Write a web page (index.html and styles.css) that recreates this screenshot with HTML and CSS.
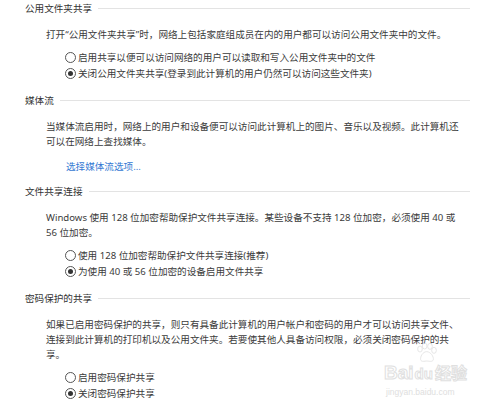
FILE: index.html
```html
<!DOCTYPE html>
<html>
    <head>
        <meta charset="utf-8">
        <link rel="stylesheet" href="styles.css">
    </head>
    <body>
        <div class="panel">
            <div class="group">
                <div class="group-head">
                    <span class="group-title">公用文件夹共享</span>
                    <span class="group-rule"></span>
                </div>
                <p class="group-text">打开“公用文件夹共享”时，网络上包括家庭组成员在内的用户都可以访问公用文件夹中的文件。</p>
                <ul class="options">
                    <li class="option"><span class="radio"></span>启用共享以便可以访问网络的用户可以读取和写入公用文件夹中的文件</li>
                    <li class="option"><span class="radio checked"></span>关闭公用文件夹共享(登录到此计算机的用户仍然可以访问这些文件夹)</li>
                </ul>
            </div>

            <div class="group">
                <div class="group-head">
                    <span class="group-title">媒体流</span>
                    <span class="group-rule"></span>
                </div>
                <p class="group-text">当媒体流启用时，网络上的用户和设备便可以访问此计算机上的图片、音乐以及视频。此计算机还<br>可以在网络上查找媒体。</p>
                <a class="group-link" href="#">选择媒体流选项...</a>
            </div>

            <div class="group">
                <div class="group-head">
                    <span class="group-title">文件共享连接</span>
                    <span class="group-rule"></span>
                </div>
                <p class="group-text">Windows 使用 128 位加密帮助保护文件共享连接。某些设备不支持 128 位加密，必须使用 40 或<br>56 位加密。</p>
                <ul class="options">
                    <li class="option"><span class="radio"></span>使用 128 位加密帮助保护文件共享连接(推荐)</li>
                    <li class="option"><span class="radio checked"></span>为使用 40 或 56 位加密的设备启用文件共享</li>
                </ul>
            </div>

            <div class="group">
                <div class="group-head">
                    <span class="group-title">密码保护的共享</span>
                    <span class="group-rule"></span>
                </div>
                <p class="group-text">如果已启用密码保护的共享，则只有具备此计算机的用户帐户和密码的用户才可以访问共享文件、<br>连接到此计算机的打印机以及公用文件夹。若要使其他人具备访问权限，必须关闭密码保护的共<br>享。</p>
                <ul class="options">
                    <li class="option"><span class="radio"></span>启用密码保护共享</li>
                    <li class="option"><span class="radio checked"></span>关闭密码保护共享</li>
                </ul>
            </div>
        </div>

        <div class="watermark">
            <svg class="paw" width="26" height="20" viewBox="0 0 34 30">
                <ellipse cx="8" cy="9" rx="3.5" ry="4.5" />
                <ellipse cx="15" cy="4.5" rx="3.5" ry="4.5" />
                <ellipse cx="23" cy="5" rx="3.5" ry="4.5" />
                <ellipse cx="29" cy="11" rx="3.5" ry="4.5" />
                <path d="M18 13 C12 13 8 21 9 25 C10 29 15 27 18 27 C21 27 27 29 28 25 C29 21 24 13 18 13 Z" />
            </svg>
            <div class="wm-brand"><span>Bai</span><span class="wm-du">du</span><span class="wm-cn">经验</span></div>
            <div class="wm-url">jingyan.baidu.com</div>
        </div>
    </body>
</html>
```

FILE: styles.css
```css
* {
    box-sizing: border-box;
}

body {
    margin: 0;
    background: #ffffff;
    color: #3b3b3b;
    font-family: "Noto Sans", "Noto Sans CJK SC", sans-serif;
    font-size: 9.6px;
    line-height: 15px;
    position: relative;
    width: 500px;
    height: 402px;
    overflow: hidden;
}

.panel {
    padding: 1px 30px 0 25px;
}

.group + .group {
    margin-top: 12px;
}

.group-head {
    display: flex;
    align-items: center;
    gap: 6px;
    height: 15px;
    color: #333333;
}

.group-rule {
    flex: 1;
    height: 1px;
    background: #e3e3e3;
}

.group-text {
    margin: 11px -28px 0 21px;
    white-space: nowrap;
}

.options {
    list-style: none;
    margin: 8px 0 0 40px;
    padding: 0;
}

.option {
    display: flex;
    align-items: center;
    height: 15.5px;
    white-space: nowrap;
}

.radio {
    width: 11px;
    height: 11px;
    border: 1px solid #555555;
    border-radius: 50%;
    margin-right: 2px;
    flex: none;
    display: flex;
    align-items: center;
    justify-content: center;
}

.radio.checked::after {
    content: "";
    width: 5px;
    height: 5px;
    border-radius: 50%;
    background: #333333;
}

.group-link {
    display: block;
    margin: 10px 0 -2px 41px;
    color: #3579d3;
    text-decoration: none;
}

.watermark {
    position: absolute;
    left: 384px;
    top: 343px;
    width: 92px;
}

.paw {
    display: block;
    margin: 0 0 0 29px;
    fill: none;
    stroke: #e2e2e2;
    stroke-width: 1.3;
}

.wm-brand {
    font-family: "Liberation Sans", "Noto Sans CJK SC", sans-serif;
    font-size: 19px;
    line-height: 20px;
    font-weight: bold;
    color: transparent;
    -webkit-text-stroke: 1px #e0e0e0;
    white-space: nowrap;
}

.wm-du {
    font-size: 15px;
    margin: 0 2px 0 1px;
}

.wm-cn {
    font-size: 16px;
}

.wm-url {
    font-family: "Liberation Sans", sans-serif;
    font-size: 8.5px;
    line-height: 12px;
    color: #dedede;
    margin: 2px 0 0 2px;
}
```
